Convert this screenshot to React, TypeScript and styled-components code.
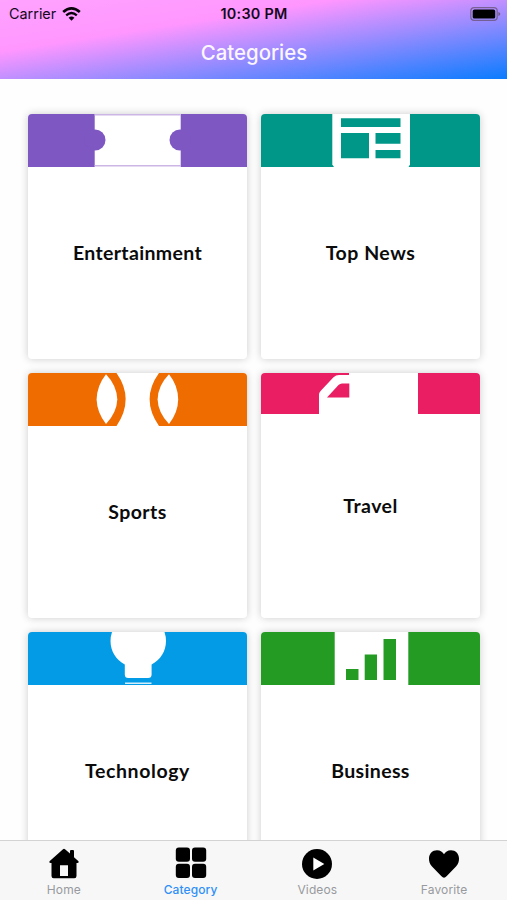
import React from "react";
import styled, { createGlobalStyle } from "styled-components";

const GlobalStyle = createGlobalStyle`
  *, *::before, *::after { box-sizing: border-box; }
  body { margin: 0; background: #fff; }
  svg { display: block; }
`;

const Screen = styled.div`
  width: 507px;
  height: 900px;
  display: flex;
  flex-direction: column;
  overflow: hidden;
  background: #fefefe;
  font-family: Inter, "Liberation Sans", sans-serif;
`;

const Header = styled.header`
  flex: none;
  height: 79px;
  display: flex;
  flex-direction: column;
  background: linear-gradient(to bottom right, #ffa3ff 0%, #ff96ff 33%, #0a7cff 100%);
`;

const StatusBar = styled.div`
  height: 27px;
  padding: 0 6px 0 9px;
  display: grid;
  grid-template-columns: 1fr auto 1fr;
  align-items: center;
  color: #140a1c;
  font-size: 14.4px;
  line-height: 27px;
`;

const Carrier = styled.div`
  display: flex;
  align-items: center;
  gap: 6px;
`;

const Clock = styled.div`
  font-weight: 600;
  font-size: 14.4px;
  letter-spacing: 0.25px;
  padding-right: 2px;
`;

const BatterySlot = styled.div`
  display: flex;
  justify-content: flex-end;
`;

const Title = styled.h1`
  margin: 0;
  padding-left: 1px;
  color: #fbf6ff;
  font-size: 20.4px;
  font-weight: 500;
  line-height: 51px;
  text-align: center;
  letter-spacing: 0;
`;

const Content = styled.main`
  flex: 1;
  min-height: 0;
  overflow: hidden;
  padding: 35.2px 27px 0 28px;
`;

const CardGrid = styled.div`
  display: grid;
  grid-template-columns: 219px 219px;
  grid-auto-rows: 244.4px;
  gap: 14.6px 14px;
`;

const Card = styled.article`
  display: flex;
  flex-direction: column;
  background: #fff;
  border-radius: 4px;
  box-shadow: 0 0 9px rgba(0, 0, 0, 0.2);
`;

const Banner = styled.div<{ $color: string; $height: number }>`
  flex: none;
  height: ${(p) => p.$height}px;
  background: ${(p) => p.$color};
  border-radius: 4px 4px 0 0;
  overflow: hidden;
`;

const CardBody = styled.div`
  flex: 1;
  display: flex;
  align-items: center;
  justify-content: center;
  padding-bottom: 20px;
`;

const CardLabel = styled.h2<{ $spacing: number }>`
  margin: 0;
  font-family: Lato, "Open Sans", sans-serif;
  font-weight: 700;
  font-size: 19.5px;
  line-height: 26px;
  color: #0b0b0b;
  white-space: nowrap;
  letter-spacing: ${(p) => p.$spacing}px;
`;

const TabBar = styled.nav`
  flex: none;
  height: 60px;
  display: grid;
  grid-template-columns: repeat(4, 1fr);
  background: #f7f7f7;
  border-top: 1px solid #d3d3d3;
`;

const Tab = styled.div<{ $active?: boolean }>`
  display: flex;
  flex-direction: column;
  align-items: center;
  padding: 6px 0 0 1px;
  font-size: 12px;
  line-height: 16px;
  letter-spacing: ${(p) => (p.$active ? 0.1 : 0.15)}px;
  font-weight: ${(p) => (p.$active ? 500 : 400)};
  color: ${(p) => (p.$active ? "#2f8ff7" : "#979a9e")};
`;

const TabIcon = styled.svg`
  width: 32px;
  height: 32px;
  margin-bottom: 3px;
`;

const WifiIcon = () => (
  <svg width="19" height="14" viewBox="0 0 19 14" fill="none" stroke="#08040a">
    <path d="M1.2 5.1Q9.5-2.2 17.8 5.1" strokeWidth="2.7" />
    <path d="M4.2 8.3Q9.5 3.8 14.8 8.3" strokeWidth="2.4" />
    <path d="M6.6 10.8Q9.5 8.2 12.4 10.8L9.5 13.8Z" fill="#08040a" stroke="none" />
  </svg>
);

const BatteryIcon = () => (
  <svg width="31" height="14" viewBox="0 0 31 14">
    <rect x="0.8" y="0.6" width="26.4" height="12.8" rx="3.4" fill="none" stroke="#65506f" strokeOpacity="0.75" strokeWidth="1.2" />
    <rect x="2.7" y="2.4" width="22.5" height="9.2" rx="1.7" fill="#000" />
    <path d="M28.4 5q1.9.7 1.9 2t-1.9 2z" fill="#65506f" fillOpacity="0.8" />
  </svg>
);

const TicketArt = () => (
  <svg width="219" height="53" viewBox="0 0 219 53">
    <rect x="66.7" width="86" height="53" fill="#fff" />
    <path d="M66.7.7H152.7M66.7 51.7H152.7" stroke="#cbb6e6" strokeWidth="1.4" />
    <circle cx="67" cy="26" r="10.5" fill="#7e57c2" />
    <circle cx="152" cy="26" r="10.5" fill="#7e57c2" />
  </svg>
);

const NewsArt = () => (
  <svg width="219" height="53" viewBox="0 0 219 53">
    <path d="M71.3 0H149V50.5L147.5 53H73L71.3 50.5Z" fill="#fff" />
    <path d="M80 4.3H139.5V13H80ZM80 19H108V44.3H80ZM114.5 19H139.5V29.7H114.5ZM114.5 36H139.5V44.3H114.5Z" fill="#009788" />
  </svg>
);

const BallArt = () => (
  <svg width="219" height="53" viewBox="0 0 219 53">
    <path d="M88.5 0Q106.8 26 88.5 53H131Q112.2 26 131 0Z" fill="#fff" />
    <path d="M78 1.3Q88.8 12.5 89.3 26.5Q88.8 39.5 78 51Q69 39.5 68.6 26.5Q69 12.5 78 1.3Z" fill="#fff" />
    <path d="M141 1.3Q150 12.5 150.2 26.5Q150 39.5 141 51Q130 39.5 129.6 26.5Q130 12.5 141 1.3Z" fill="#fff" />
  </svg>
);

const TruckArt = () => (
  <svg width="219" height="41" viewBox="0 0 219 41">
    <path d="M58 41V22Q58 19.5 60 17.5L72.5 4.3Q75 2 78 2H88V0H157V41Z" fill="#fff" />
    <path d="M66 24.5L77.5 12Q79 10.5 81 10.5H88.3V24.5Z" fill="#e91e63" />
  </svg>
);

const BulbArt = () => (
  <svg width="219" height="53" viewBox="0 0 219 53">
    <path d="M84 0Q82.5 4.5 82.5 9C82.5 19 88 28 96.8 32.5V42.5Q96.8 46 100.3 46H120Q123.6 46 123.6 42.5V32.5C132.5 28 138 19 138 9Q138 4.5 136.5 0Z" fill="#fff" />
    <path d="M97 51.2H123.5" stroke="#d5eefb" strokeWidth="1.6" />
  </svg>
);

const ChartArt = () => (
  <svg width="219" height="53" viewBox="0 0 219 53">
    <rect x="73.7" width="73.6" height="53" fill="#fff" />
    <path d="M85 37H97.5V48H85ZM103.7 22.5H116V48H103.7ZM122.5 7H135V48H122.5Z" fill="#249b22" />
  </svg>
);

const categories = [
  { name: "Entertainment", color: "#7e57c2", height: 52.4, spacing: 0.35, Art: TicketArt },
  { name: "Top News", color: "#009788", height: 52.4, spacing: 0.5, Art: NewsArt },
  { name: "Sports", color: "#ef6c00", height: 52.4, spacing: 0.45, Art: BallArt },
  { name: "Travel", color: "#e91e63", height: 40.8, spacing: 0.45, Art: TruckArt },
  { name: "Technology", color: "#039be5", height: 52.4, spacing: 0.6, Art: BulbArt },
  { name: "Business", color: "#249b22", height: 52.4, spacing: 0.35, Art: ChartArt },
];

const HomeIcon = () => (
  <TabIcon viewBox="0 0 32 32">
    <path
      fillRule="evenodd"
      d="M15 2.2Q16 1.3 17 2.2L22 6.6V4.2Q22 3 23 3H25Q26 3 26 4.2V10.2L30.5 14.2Q31.3 15.8 29.5 16H28.5V29Q28.5 31.2 26.3 31.2H5.7Q3.5 31.2 3.5 29V16H2.5Q.7 15.8 1.5 14.2ZM12 18.3V29H20V18.3Z"
    />
  </TabIcon>
);

const GridIcon = () => (
  <TabIcon viewBox="0 0 32 32">
    <rect x="0.8" y="0.6" width="14.2" height="14.2" rx="3" />
    <rect x="17" y="0.6" width="14.2" height="14.2" rx="3" />
    <rect x="0.8" y="16.8" width="14.2" height="14.2" rx="3" />
    <rect x="17" y="16.8" width="14.2" height="14.2" rx="3" />
  </TabIcon>
);

const PlayIcon = () => (
  <TabIcon viewBox="0 0 32 32">
    <circle cx="16" cy="17" r="15" />
    <path d="M12.3 10.5V23.5L23.3 17Z" fill="#fff" />
  </TabIcon>
);

const HeartIcon = () => (
  <TabIcon viewBox="0 0 32 32">
    <path d="M16 30.8Q14.8 30.8 13.2 29L4 19.5C1.5 16.8 1 14 1 11.5C1 6.5 4.5 3.2 9 3.2C12.5 3.2 14.7 5 16 7.3C17.3 5 19.5 3.2 23 3.2C27.5 3.2 31 6.5 31 11.5C31 14 30.5 16.8 28 19.5L18.8 29Q17.2 30.8 16 30.8Z" />
  </TabIcon>
);

const tabs = [
  { name: "Home", Icon: HomeIcon },
  { name: "Category", Icon: GridIcon, active: true },
  { name: "Videos", Icon: PlayIcon },
  { name: "Favorite", Icon: HeartIcon },
];

export default function App() {
  return (
    <>
      <GlobalStyle />
      <Screen>
        <Header>
          <StatusBar>
            <Carrier>
              Carrier
              <WifiIcon />
            </Carrier>
            <Clock>10:30 PM</Clock>
            <BatterySlot>
              <BatteryIcon />
            </BatterySlot>
          </StatusBar>
          <Title>Categories</Title>
        </Header>
        <Content>
          <CardGrid>
            {categories.map(({ name, color, height, spacing, Art }) => (
              <Card key={name}>
                <Banner $color={color} $height={height}>
                  <Art />
                </Banner>
                <CardBody>
                  <CardLabel $spacing={spacing}>{name}</CardLabel>
                </CardBody>
              </Card>
            ))}
          </CardGrid>
        </Content>
        <TabBar>
          {tabs.map(({ name, Icon, active }) => (
            <Tab key={name} $active={active}>
              <Icon />
              {name}
            </Tab>
          ))}
        </TabBar>
      </Screen>
    </>
  );
}
